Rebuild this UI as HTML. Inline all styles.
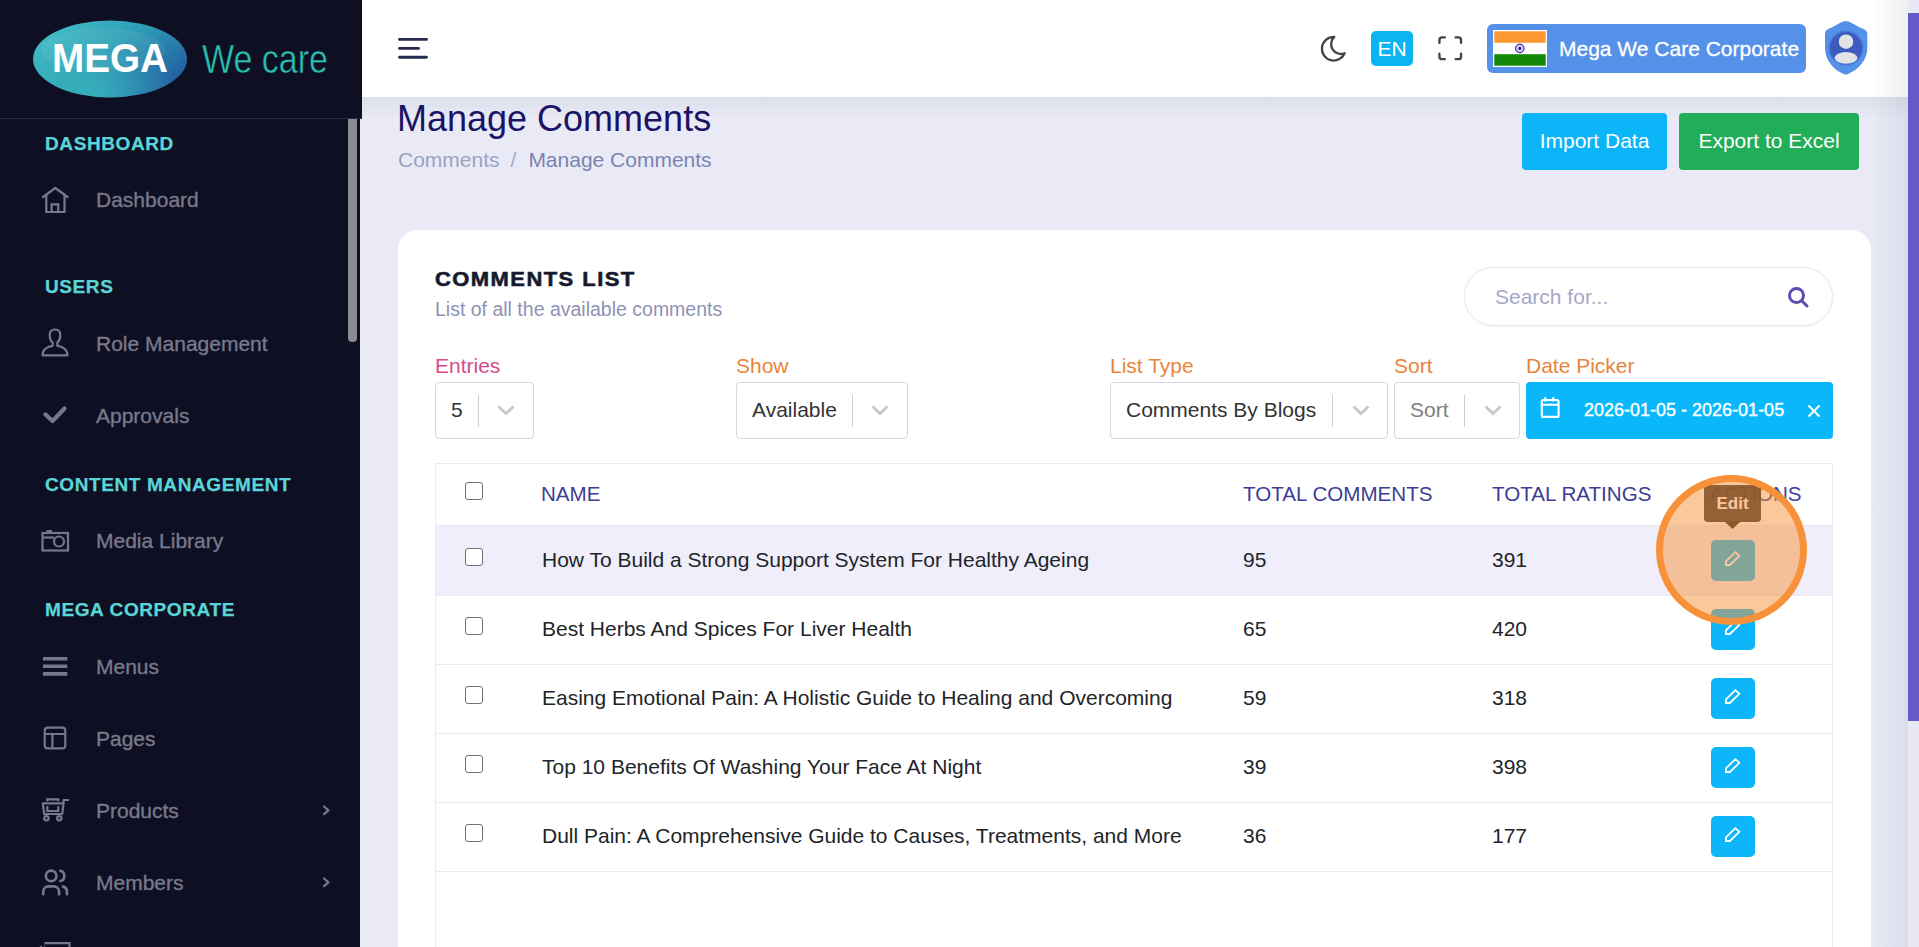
<!DOCTYPE html>
<html><head><meta charset="utf-8">
<style>
*{box-sizing:border-box;margin:0;padding:0}
html,body{width:1919px;height:947px;overflow:hidden}
body{font-family:"Liberation Sans",sans-serif;background:#e9eaf6;position:relative;color:#212529}
.abs{position:absolute}
svg{display:block}
#sidebar{left:0;top:0;width:360px;height:947px;background:#0e0f22}
#logo{left:0;top:0;width:362px;height:119px;background:#0e0f22;border-bottom:1px solid #2a2b40}
#sbthumb{left:348px;top:119px;width:9px;height:223px;background:#8a8b93;border-radius:0 0 4px 4px}
.sec{position:absolute;left:45px;font-weight:bold;font-size:19px;color:#5ad5d8;-webkit-text-stroke:0.25px #5ad5d8;letter-spacing:0.6px;white-space:nowrap}
.item{position:absolute;left:96px;font-size:21px;color:#78798b;-webkit-text-stroke:0.35px #78798b;white-space:nowrap}
.ico{position:absolute;left:0;top:0}
#header{left:362px;top:0;width:1546px;height:97px;background:#fff}
#vscroll{left:1908px;top:0;width:11px;height:947px;background:#e8e8f4}
#vthumb{left:1908px;top:13px;width:11px;height:708px;background:#6459c8}
.title{left:397px;top:98px;font-size:36px;color:#1b1464;white-space:nowrap}
.bc{left:398px;top:148px;font-size:21px;white-space:nowrap}
.btn{color:#fff;font-size:21px;border-radius:4px;text-align:center}
#card{left:398px;top:230px;width:1473px;height:760px;background:#fff;border-radius:20px}
.lbl{position:absolute;top:354px;font-size:21px;white-space:nowrap;color:#e8853a}
.sel{position:absolute;top:382px;background:#fff;border:1px solid #d6d6dc;border-radius:4px;height:57px}
.sel .v{position:absolute;top:15px;font-size:21px;color:#333;white-space:nowrap}
.sel .sep{position:absolute;top:12px;width:1px;height:32px;background:#cfcfcf}
.sel svg{position:absolute;top:21px}
#table{left:435px;top:463px;width:1398px;height:484px;border:1px solid #e9ebf0;border-bottom:none}
.row{position:absolute;left:0;width:1396px;height:69px;border-top:1px solid #e9ebf0}
.cb{position:absolute;left:29px;width:18px;height:18px;border:1.4px solid #707070;border-radius:3px;background:#fff}
.cell{position:absolute;font-size:21px;color:#212529;white-space:nowrap;top:22px}
.th{position:absolute;font-size:20.6px;color:#3d3d94;white-space:nowrap;top:17.5px}
.eb{position:absolute;left:1275px;top:14px;width:44px;height:41px;background:#0cb6f8;border-radius:5px}
.eb svg{position:absolute;left:0;top:0}
</style></head><body>

<div id="sidebar" class="abs"></div>
<div id="logo" class="abs">
  <svg class="abs" style="left:33px;top:20px" width="156" height="78" viewBox="0 0 156 78">
    <defs>
      <linearGradient id="lg" x1="0" y1="0.2" x2="1" y2="0.8">
        <stop offset="0" stop-color="#45bfc6"/>
        <stop offset="0.45" stop-color="#2e9fb6"/>
        <stop offset="1" stop-color="#2258a0"/>
      </linearGradient>
      <radialGradient id="lg2" cx="40%" cy="95%" r="55%">
        <stop offset="0" stop-color="#3cc0c0" stop-opacity="0.7"/>
        <stop offset="1" stop-color="#3cc0c0" stop-opacity="0"/>
      </radialGradient>
    </defs>
    <ellipse cx="77" cy="39" rx="77" ry="38.5" fill="url(#lg)"/><ellipse cx="77" cy="39" rx="77" ry="38.5" fill="url(#lg2)"/><ellipse cx="70" cy="30" rx="62" ry="22" fill="#ffffff" opacity="0.06"/>
    <text x="19" y="52" font-family="Liberation Sans" font-weight="bold" font-size="40" fill="#fff" textLength="116" lengthAdjust="spacingAndGlyphs">MEGA</text>
  </svg>
  <svg class="abs" style="left:195px;top:20px" width="150" height="70" viewBox="0 0 150 70"><text x="7" y="52.5" font-family="Liberation Sans" font-size="41" fill="#2bbfb4" stroke="#0e0f22" stroke-width="0.5" textLength="126" lengthAdjust="spacingAndGlyphs">We care</text></svg>
</div>
<div id="sbthumb" class="abs"></div>

<!-- sidebar icons -->
<svg class="abs" style="left:0;top:0" width="360" height="947" viewBox="0 0 360 947" fill="none" stroke="#77788a" stroke-width="2.2">
  <!-- home -->
  <path d="M43 197 L55.3 188 L67.6 197" stroke-linecap="round" stroke-linejoin="round"/>
  <path d="M46.3 195 V212 H64.5 V195"/>
  <path d="M51.6 212 V204.3 H58.2 V212"/>
  <!-- user -->
  <path d="M42.5 355.3 H67.5 C67.5 350 63 346.3 57.3 345.8 V342.8 C59.3 341 60.3 338 60.3 335 C60.3 331.2 58 329.5 55 329.5 C52 329.5 49.7 331.2 49.7 335 C49.7 338 50.7 341 52.7 342.8 V345.8 C47 346.3 42.5 350 42.5 355.3 Z" stroke-linejoin="round"/>
  <!-- check -->
  <path d="M45.5 414.5 L52.5 421 L64.5 408.5" stroke-width="4.2" stroke-linecap="round" stroke-linejoin="round"/>
  <!-- camera -->
  <rect x="42.5" y="533" width="25.5" height="17.5"/>
  <path d="M42.5 537.5 H54"/>
  <rect x="46.5" y="530" width="5.5" height="2.5" fill="#77788a" stroke="none"/>
  <circle cx="59" cy="541.5" r="5"/>
  <!-- menus -->
  <path d="M43 658.7 H67.3 M43 666.2 H67.3 M43 673.9 H67.3" stroke-width="3.6"/>
  <!-- pages -->
  <rect x="44.7" y="727.7" width="20.6" height="20.7" rx="3"/>
  <path d="M44.7 734 H65.3 M52.4 734 V748.4"/>
  <!-- cart -->
  <path d="M42.8 803.3 H63.5 L62.3 814 H44.2 Z" stroke-linejoin="round"/>
  <path d="M63.5 803.3 L63.7 800 H68.2" stroke-linecap="round"/>
  <path d="M47.3 806 V811 H58.3 V806" />
  <path d="M47.3 801.3 V799.3 H58.3 V801.3"/>
  <circle cx="46.4" cy="818.3" r="2.2"/>
  <circle cx="59.3" cy="818.3" r="2.2"/>
  <!-- members -->
  <g transform="translate(39.3 866.7) scale(1.316)" stroke-width="2" stroke-linecap="round" stroke-linejoin="round">
    <path d="M9 7m-4 0a4 4 0 1 0 8 0a4 4 0 1 0 -8 0"/>
    <path d="M3 21v-2a4 4 0 0 1 4 -4h4a4 4 0 0 1 4 4v2"/>
    <path d="M16 3.13a4 4 0 0 1 0 7.75"/>
    <path d="M21 21v-2a4 4 0 0 0 -3 -3.85"/>
  </g>
  <!-- partial bottom icon -->
  <path d="M44.5 943.2 H69.5 V950 M41 946 V950 M45 946 H44.5"/>
  <!-- chevrons -->
  <path d="M324 806.5 L328.5 810.3 L324 814.2 M324 878.5 L328.5 882.3 L324 886.2" stroke-width="2.2" stroke-linecap="round" stroke-linejoin="round"/>
</svg>

<div class="sec" style="top:133px">DASHBOARD</div>
<div class="item" style="top:188px">Dashboard</div>
<div class="sec" style="top:276px">USERS</div>
<div class="item" style="top:332px">Role Management</div>
<div class="item" style="top:404px">Approvals</div>
<div class="sec" style="top:474px">CONTENT MANAGEMENT</div>
<div class="item" style="top:529px">Media Library</div>
<div class="sec" style="top:599px">MEGA CORPORATE</div>
<div class="item" style="top:655px">Menus</div>
<div class="item" style="top:727px">Pages</div>
<div class="item" style="top:799px">Products</div>
<div class="item" style="top:871px">Members</div>

<!-- header -->
<div id="header" class="abs"></div>
<svg class="abs" style="left:390px;top:25px" width="50" height="50" viewBox="0 0 50 50" stroke="#262b4f" stroke-width="2.9" stroke-linecap="round">
  <path d="M9.5 14.4 H36.5 M9.5 23.4 H28.5 M9.5 32.3 H36.5"/>
</svg>
<!-- moon -->
<svg class="abs" style="left:1318px;top:33px" width="31.5" height="31.5" viewBox="0 0 24 24" fill="none" stroke="#444" stroke-width="1.75" stroke-linecap="round" stroke-linejoin="round">
  <path d="M12 3c.132 0 .263 0 .393 0a7.5 7.5 0 0 0 7.92 12.446a9 9 0 1 1 -8.313 -12.454z"/>
</svg>
<div class="abs" style="left:1371px;top:31px;width:42px;height:35px;background:#0bb5f2;border-radius:5px;color:#fff;font-size:21px;line-height:35px;text-align:center">EN</div>
<!-- fullscreen -->
<svg class="abs" style="left:1433.5px;top:32px" width="32.5" height="32.5" viewBox="0 0 24 24" fill="none" stroke="#444" stroke-width="1.75" stroke-linecap="round" stroke-linejoin="round">
  <path d="M4 8v-2a2 2 0 0 1 2 -2h2 M4 16v2a2 2 0 0 0 2 2h2 M16 4h2a2 2 0 0 1 2 2v2 M16 20h2a2 2 0 0 0 2 -2v-2"/>
</svg>
<div class="abs" style="left:1487px;top:24px;width:319px;height:49px;background:#5591e8;border-radius:6px"></div>
<svg class="abs" style="left:1493px;top:30px" width="54" height="37" viewBox="0 0 54 37">
  <rect x="0" y="0" width="54" height="37" fill="#fff"/>
  <rect x="1.3" y="1.3" width="51.4" height="11.5" fill="#fd9833"/>
  <rect x="1.3" y="24.2" width="51.4" height="11.5" fill="#138808"/>
  <circle cx="26.8" cy="18.4" r="4.3" fill="#c8c8f0" stroke="#000080" stroke-width="0.9"/>
  <circle cx="26.8" cy="18.4" r="1.3" fill="#000080"/>
</svg>
<div class="abs" style="left:1559px;top:37px;font-size:21px;color:#fff;-webkit-text-stroke:0.3px #fff;white-space:nowrap">Mega We Care Corporate</div>
<svg class="abs" style="left:1824px;top:20px" width="45" height="56" viewBox="0 0 45 56">
  <path d="M21.8 1 C25 1 30 4.5 35 7 C38.5 8.8 43.3 9.5 43.3 14 V28 C43.3 41 33 50.5 23.3 54.3 C22.4 54.7 21.2 54.7 20.3 54.3 C10.6 50.5 1 41 1 28 V14 C1 9.5 5.2 8.8 8.6 7 C13.6 4.5 18.6 1 21.8 1 Z" fill="#5491ea"/><circle cx="22" cy="28" r="17.5" fill="#4a78d8"/>
  <circle cx="22" cy="28" r="16" fill="#3c5bbf"/>
  <circle cx="22" cy="21.7" r="7.2" fill="#e2e3e6"/>
  <ellipse cx="22" cy="37.8" rx="11.4" ry="5.9" fill="#e2e3e6"/>
</svg>

<div class="abs" style="left:362px;top:97px;width:1546px;height:22px;background:linear-gradient(rgba(205,210,220,0.45),rgba(205,210,220,0))"></div>
<div class="abs" style="left:1872px;top:0;width:36px;height:947px;background:linear-gradient(to right,rgba(40,40,90,0),rgba(40,40,90,0.07))"></div>
<div id="vscroll" class="abs"></div>
<div id="vthumb" class="abs"></div>

<div class="abs title">Manage Comments</div>
<div class="abs bc"><span style="color:#9ba3c2">Comments</span><span style="color:#a3aac6;padding:0 12px 0 11px">/</span><span style="color:#7a84b2">Manage Comments</span></div>
<div class="abs btn" style="left:1522px;top:113px;width:145px;height:57px;background:#0bb5f7;line-height:55px">Import Data</div>
<div class="abs btn" style="left:1679px;top:113px;width:180px;height:57px;background:#22ae58;line-height:55px">Export to Excel</div>

<div id="card" class="abs"></div>

<div class="abs" style="left:435px;top:267px;font-size:21px;font-weight:bold;letter-spacing:1.4px;color:#151a2e;-webkit-text-stroke:0.6px #151a2e;transform:scaleX(1.045);transform-origin:0 0;white-space:nowrap">COMMENTS LIST</div>
<div class="abs" style="left:435px;top:298px;font-size:19.5px;color:#8e92b4;white-space:nowrap">List of all the available comments</div>

<!-- search -->
<div class="abs" style="left:1464px;top:267px;width:369px;height:59px;border:1px solid #e6e6ef;border-radius:30px;background:#fff;box-shadow:0 1px 3px rgba(120,120,170,0.08)"></div>
<div class="abs" style="left:1495px;top:285px;font-size:21px;color:#a3a9c3;white-space:nowrap">Search for...</div>
<svg class="abs" style="left:1786px;top:285px" width="24" height="24" viewBox="0 0 24 24" fill="none" stroke="#5a4fb0" stroke-width="3" stroke-linecap="round">
  <circle cx="10.5" cy="10.5" r="7"/>
  <path d="M16 16 L21 21"/>
</svg>

<!-- filters -->
<div class="lbl" style="left:435px;color:#d44c8b">Entries</div>
<div class="sel" style="left:435px;width:99px"><div class="v" style="left:15px">5</div><div class="sep" style="left:42px"></div>
  <svg style="left:60px" width="20" height="14" viewBox="0 0 20 14" fill="none" stroke="#c8c8c8" stroke-width="3"><path d="M2.5 2.5 L10 9.5 L17.5 2.5"/></svg></div>
<div class="lbl" style="left:736px">Show</div>
<div class="sel" style="left:736px;width:172px"><div class="v" style="left:15px">Available</div><div class="sep" style="left:115px"></div>
  <svg style="left:133px" width="20" height="14" viewBox="0 0 20 14" fill="none" stroke="#c8c8c8" stroke-width="3"><path d="M2.5 2.5 L10 9.5 L17.5 2.5"/></svg></div>
<div class="lbl" style="left:1110px">List Type</div>
<div class="sel" style="left:1110px;width:278px"><div class="v" style="left:15px">Comments By Blogs</div><div class="sep" style="left:221px"></div>
  <svg style="left:240px" width="20" height="14" viewBox="0 0 20 14" fill="none" stroke="#c8c8c8" stroke-width="3"><path d="M2.5 2.5 L10 9.5 L17.5 2.5"/></svg></div>
<div class="lbl" style="left:1394px">Sort</div>
<div class="sel" style="left:1394px;width:126px"><div class="v" style="left:15px;color:#808080">Sort</div><div class="sep" style="left:69px"></div>
  <svg style="left:88px" width="20" height="14" viewBox="0 0 20 14" fill="none" stroke="#c8c8c8" stroke-width="3"><path d="M2.5 2.5 L10 9.5 L17.5 2.5"/></svg></div>
<div class="lbl" style="left:1526px">Date Picker</div>
<div class="abs" style="left:1526px;top:382px;width:307px;height:57px;background:#09b7fa;border-radius:4px"></div>
<svg class="abs" style="left:1538px;top:395px" width="24" height="24" viewBox="0 0 24 24" fill="none" stroke="#fff" stroke-width="2.1">
  <rect x="3.8" y="5" width="16.8" height="16.9" rx="1.5"/>
  <path d="M3.8 9.7 H20.6 M7.3 2.3 V6.5 M15.3 2.3 V6.5"/>
</svg>
<div class="abs" style="left:1584px;top:400px;font-size:18px;color:#fff;-webkit-text-stroke:0.4px #fff;white-space:nowrap">2026-01-05 - 2026-01-05</div>
<svg class="abs" style="left:1806px;top:403px" width="16" height="16" viewBox="0 0 16 16" stroke="#fff" stroke-width="2"><path d="M2.5 2.5 L13.5 13.5 M13.5 2.5 L2.5 13.5"/></svg>

<!-- table -->
<div id="table" class="abs">
  <div class="cb" style="top:18px"></div>
  <div class="th" style="left:105px">NAME</div>
  <div class="th" style="left:807px">TOTAL COMMENTS</div>
  <div class="th" style="left:1056px">TOTAL RATINGS</div>
  <div class="th" style="left:1274px">ACTIONS</div>
  <div class="row" style="top:61px;height:70px;background:#efeefa"><div class="cb" style="top:22px"></div><div class="cell" style="left:106px">How To Build a Strong Support System For Healthy Ageing</div><div class="cell" style="left:807px">95</div><div class="cell" style="left:1056px">391</div><div class="eb"><svg width="44" height="41" viewBox="0 0 44 41" fill="none" stroke="#fff" stroke-width="1.8" stroke-linejoin="miter"><path d="M14.9 21.4 L24.4 12.2 L28.3 15.8 L18.9 25 H14.9 Z"/></svg></div></div>
  <div class="row" style="top:131px"><div class="cb" style="top:21px"></div><div class="cell" style="left:106px;top:21px">Best Herbs And Spices For Liver Health</div><div class="cell" style="left:807px;top:21px">65</div><div class="cell" style="left:1056px;top:21px">420</div><div class="eb" style="top:13px"><svg width="44" height="41" viewBox="0 0 44 41" fill="none" stroke="#fff" stroke-width="1.8"><path d="M14.9 21.4 L24.4 12.2 L28.3 15.8 L18.9 25 H14.9 Z"/></svg></div></div>
  <div class="row" style="top:200px"><div class="cb" style="top:21px"></div><div class="cell" style="left:106px;top:21px">Easing Emotional Pain: A Holistic Guide to Healing and Overcoming</div><div class="cell" style="left:807px;top:21px">59</div><div class="cell" style="left:1056px;top:21px">318</div><div class="eb" style="top:13px"><svg width="44" height="41" viewBox="0 0 44 41" fill="none" stroke="#fff" stroke-width="1.8"><path d="M14.9 21.4 L24.4 12.2 L28.3 15.8 L18.9 25 H14.9 Z"/></svg></div></div>
  <div class="row" style="top:269px"><div class="cb" style="top:21px"></div><div class="cell" style="left:106px;top:21px">Top 10 Benefits Of Washing Your Face At Night</div><div class="cell" style="left:807px;top:21px">39</div><div class="cell" style="left:1056px;top:21px">398</div><div class="eb" style="top:13px"><svg width="44" height="41" viewBox="0 0 44 41" fill="none" stroke="#fff" stroke-width="1.8"><path d="M14.9 21.4 L24.4 12.2 L28.3 15.8 L18.9 25 H14.9 Z"/></svg></div></div>
  <div class="row" style="top:338px"><div class="cb" style="top:21px"></div><div class="cell" style="left:106px;top:21px">Dull Pain: A Comprehensive Guide to Causes, Treatments, and More</div><div class="cell" style="left:807px;top:21px">36</div><div class="cell" style="left:1056px;top:21px">177</div><div class="eb" style="top:13px"><svg width="44" height="41" viewBox="0 0 44 41" fill="none" stroke="#fff" stroke-width="1.8"><path d="M14.9 21.4 L24.4 12.2 L28.3 15.8 L18.9 25 H14.9 Z"/></svg></div></div>
  <div class="row" style="top:407px"></div>
</div>

<!-- tooltip -->
<div class="abs" style="left:1704px;top:485px;width:57px;height:37px;background:#1f1f1f;opacity:0.92;border-radius:4px;color:#fff;font-size:17px;font-weight:bold;text-align:center;line-height:37px">Edit</div>
<svg class="abs" style="left:1724px;top:521px" width="17" height="9" viewBox="0 0 17 9"><path d="M0 0 L8.5 8 L17 0 Z" fill="#1f1f1f"/></svg>

<!-- highlight circle -->
<div class="abs" style="left:1656px;top:475px;width:151px;height:150px;border-radius:50%;background:rgba(247,146,58,0.5);border:7px solid #f7923a"></div>

</body></html>
